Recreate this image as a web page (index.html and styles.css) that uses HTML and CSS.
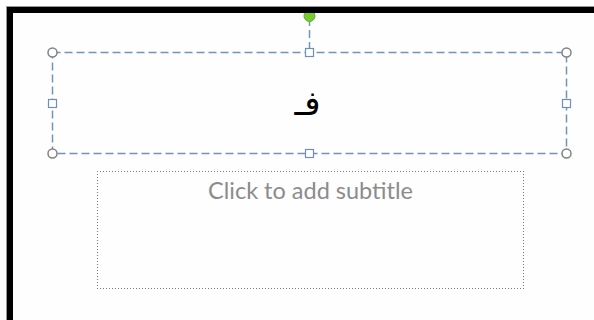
FILE: index.html
```html
<!DOCTYPE html>
<html>
<head>
<meta charset="utf-8">
<link rel="stylesheet" href="styles.css">
</head>
<body>
<div class="frame">
  <div class="slide">
    <div class="title-box">
      <svg class="selection" width="514" height="101" viewBox="0 0 514 101">
        <line x1="257.5" y1="-34" x2="257.5" y2="0" class="dash"/>
        <rect x="0.5" y="0.5" width="514" height="101" class="dash" fill="none"/>
        <circle cx="257.5" cy="-36" r="5.5" class="rotate"/>
        <circle cx="0.5" cy="0.5" r="4.5" class="corner"/>
        <circle cx="514.5" cy="0.5" r="4.5" class="corner"/>
        <circle cx="0.5" cy="101.5" r="4.5" class="corner"/>
        <circle cx="514.5" cy="101.5" r="4.5" class="corner"/>
        <rect x="253.5" y="-3.5" width="8" height="8" class="side"/>
        <rect x="253.5" y="97.5" width="8" height="8" class="side"/>
        <rect x="-3.5" y="47.5" width="8" height="8" class="side"/>
        <rect x="510.5" y="47.5" width="8" height="8" class="side"/>
      </svg>
      <span class="title-text" dir="rtl">فـ</span>
    </div>
    <div class="subtitle-box">
      <span class="subtitle-text">Click to add subtitle</span>
    </div>
  </div>
</div>
</body>
</html>
```

FILE: styles.css
```css
html {
  overflow: hidden;
  background: #ffffff;
}

body {
  margin: 0;
  padding: 0;
}

.frame {
  margin: 6px 0 0 6px;
  border-top: 1px solid #9a9a9a;
  border-left: 1px solid #9a9a9a;
  height: 313px;
}

.slide {
  border-top: 6px solid #000;
  border-left: 6px solid #000;
  background: #fefefe;
  height: 313px;
  padding: 39px 0 0 39px;
  box-sizing: border-box;
  overflow: hidden;
  display: flex;
  flex-direction: column;
  align-items: flex-start;
}

.title-box {
  position: relative;
  flex: none;
  width: 515px;
  height: 102px;
  display: flex;
  align-items: center;
  justify-content: center;
}

.selection {
  position: absolute;
  left: 0;
  top: 0;
  overflow: visible;
}

.dash {
  stroke: #7393bb;
  stroke-width: 1.5;
  stroke-dasharray: 8 4;
}

.rotate {
  fill: #76cc2c;
  stroke: #66aa33;
  stroke-width: 1;
}

.corner {
  fill: #ffffff;
  stroke: #828282;
  stroke-width: 1.5;
}

.side {
  fill: #ffffff;
  stroke: #6f8fb8;
  stroke-width: 1.2;
}

.title-text {
  font-family: "DejaVu Sans", sans-serif;
  font-size: 34px;
  line-height: 40px;
  color: #000;
  margin-left: -4px;
}

.subtitle-box {
  flex: none;
  margin: 17px 0 0 45px;
  width: 427px;
  height: 118px;
  box-sizing: border-box;
  display: flex;
  justify-content: center;
  padding-top: 5px;
  background:
    repeating-linear-gradient(90deg, #7a7a7a 0 1px, transparent 1px 3px) left top / 100% 1px no-repeat,
    repeating-linear-gradient(90deg, #7a7a7a 0 1px, transparent 1px 3px) left bottom / 100% 1px no-repeat,
    repeating-linear-gradient(180deg, #7a7a7a 0 1px, transparent 1px 3px) left top / 1px 100% no-repeat,
    repeating-linear-gradient(180deg, #7a7a7a 0 1px, transparent 1px 3px) right top / 1px 100% no-repeat;
}

.subtitle-text {
  font-family: "Lato", "Open Sans", sans-serif;
  font-size: 23.5px;
  color: #8c8c8c;
  line-height: 28px;
}
```
